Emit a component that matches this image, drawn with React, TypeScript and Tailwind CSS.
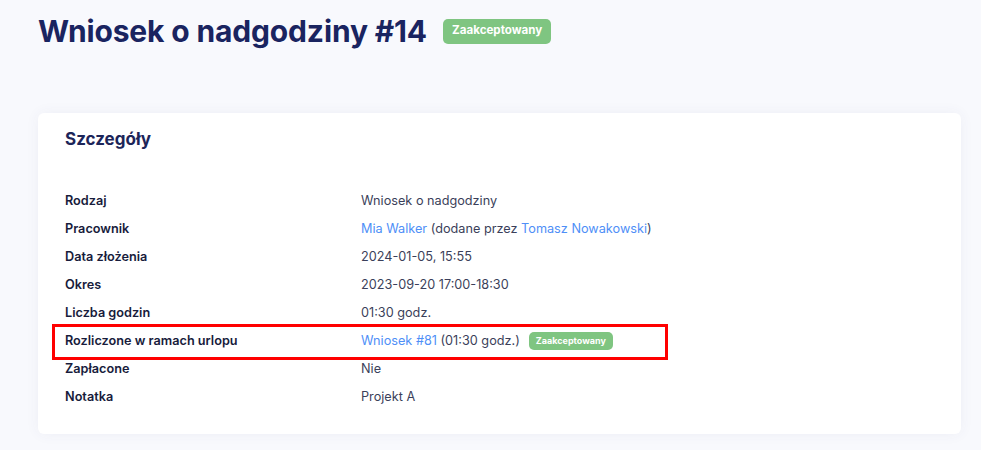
import React from 'react';

const Badge = ({ small = false }: { small?: boolean }) => (
  <span
    className={
      small
        ? 'inline-flex items-center rounded-[5px] bg-[#7fc581] px-[7px] h-[18px] text-[9px] font-bold text-white'
        : 'inline-flex items-center rounded-[5px] bg-[#7fc581] px-[9px] h-[25px] text-[11.6px] font-bold text-white'
    }
  >
    Zaakceptowany
  </span>
);

const Link = ({ children }: { children: React.ReactNode }) => (
  <a className="text-[#4f8ff7]">{children}</a>
);

const rows: { label: string; value: React.ReactNode; marked?: boolean }[] = [
  { label: 'Rodzaj', value: 'Wniosek o nadgodziny' },
  {
    label: 'Pracownik',
    value: (
      <>
        <Link>Mia Walker</Link> (dodane przez <Link>Tomasz Nowakowski</Link>)
      </>
    ),
  },
  { label: 'Data złożenia', value: '2024-01-05, 15:55' },
  { label: 'Okres', value: '2023-09-20 17:00-18:30' },
  { label: 'Liczba godzin', value: '01:30 godz.' },
  {
    label: 'Rozliczone w ramach urlopu',
    marked: true,
    value: (
      <span className="flex items-center gap-[9px]">
        <span>
          <Link>Wniosek #81</Link> (01:30 godz.)
        </span>
        <Badge small />
      </span>
    ),
  },
  { label: 'Zapłacone', value: 'Nie' },
  { label: 'Notatka', value: 'Projekt A' },
];

const App = () => {
  return (
    <div className="min-h-[450px] bg-[#f8f9fd] font-['Inter',sans-serif] pl-[38px] pr-[20px] pt-[2px]">
      <div className="flex items-center gap-[16px] h-[58px]">
        <h1 className="text-[30px] font-bold tracking-[-0.15px] text-[#1a2460]">Wniosek o nadgodziny #14</h1>
        <Badge />
      </div>

      <div className="mt-[53px] rounded-[6px] bg-white shadow-[0_0_14px_rgba(60,70,120,0.06)] px-[27px] pt-[14px] pb-[23px]">
        <h2 className="h-[26px] flex items-center text-[17px] font-bold text-[#1c2559]">Szczegóły</h2>
        <div className="mt-[34px]">
          {rows.map((r) => (
            <div key={r.label} className="relative flex h-[28px] items-center text-[12.7px]">
              <div className="w-[296px] font-semibold text-[#181c3c]">{r.label}</div>
              <div className="text-[#3b3f5a]">{r.value}</div>
              {r.marked && (
                <div className="pointer-events-none absolute left-[-13px] top-[-3px] h-[36px] w-[616px] border-[3px] border-[#ff0000]" />
              )}
            </div>
          ))}
        </div>
      </div>
    </div>
  );
};

export default App;
